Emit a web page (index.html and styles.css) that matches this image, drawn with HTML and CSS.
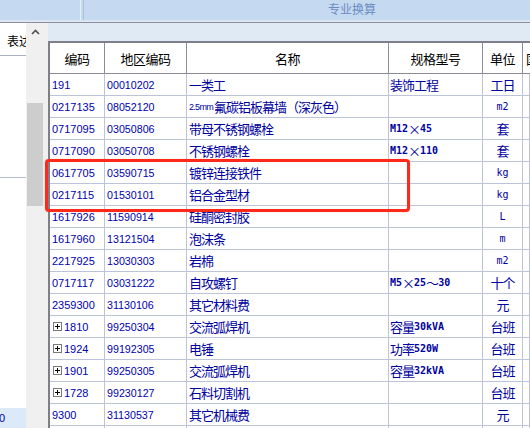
FILE: index.html
```html
<!DOCTYPE html>
<html>
<head>
<meta charset="utf-8">
<link rel="stylesheet" href="styles.css">
</head>
<body>
<div class="topbar">
  <div class="tabsep"></div>
  <div class="toptitle">专业换算</div>
</div>
<div class="topline1"></div>
<div class="topline2"></div>
<div class="main">
  <div class="left">
    <div class="lp-head">表达</div>
    <div class="lp-seg"></div>
    <div class="lp-fill"></div>
    <div class="lp-sel">0</div>
  </div>
  <div class="scroll">
    <svg class="arrow" width="9" height="6" viewBox="0 0 9 6"><path d="M1 5 L4.5 1.5 L8 5" fill="none" stroke="#505050" stroke-width="1.6"/></svg>
    <div class="thumb"></div>
  </div>
  <div class="content">
    <div class="band"></div>
    <div class="grid">
      <div class="row head">
        <div class="c">编码</div><div class="c">地区编码</div><div class="c">名称</div><div class="c">规格型号</div><div class="c">单位</div><div class="c last">国</div>
      </div>
      <div class="row"><div class="c code">191</div><div class="c code2">00010202</div><div class="c name">一类工</div><div class="c spec">装饰工程</div><div class="c unit">工日</div><div class="c"></div></div>
      <div class="row"><div class="c code">0217135</div><div class="c code2">08052120</div><div class="c name"><span class="asc">2.5mm</span>氟碳铝板幕墙（深灰色）</div><div class="c spec"></div><div class="c unit"><span class="ua">m2</span></div><div class="c"></div></div>
      <div class="row"><div class="c code">0717095</div><div class="c code2">03050806</div><div class="c name">带母不锈钢螺栓</div><div class="c spec"><span class="sa">M12</span>×<span class="sa">45</span></div><div class="c unit">套</div><div class="c"></div></div>
      <div class="row"><div class="c code">0717090</div><div class="c code2">03050708</div><div class="c name">不锈钢螺栓</div><div class="c spec"><span class="sa">M12</span>×<span class="sa">110</span></div><div class="c unit">套</div><div class="c"></div></div>
      <div class="row"><div class="c code">0617705</div><div class="c code2">03590715</div><div class="c name">镀锌连接铁件</div><div class="c spec"></div><div class="c unit"><span class="ua">kg</span></div><div class="c"></div></div>
      <div class="row"><div class="c code">0217115</div><div class="c code2">01530101</div><div class="c name">铝合金型材</div><div class="c spec"></div><div class="c unit"><span class="ua">kg</span></div><div class="c"></div></div>
      <div class="row"><div class="c code">1617926</div><div class="c code2">11590914</div><div class="c name">硅酮密封胶</div><div class="c spec"></div><div class="c unit"><span class="ua">L</span></div><div class="c"></div></div>
      <div class="row"><div class="c code">1617960</div><div class="c code2">13121504</div><div class="c name">泡沫条</div><div class="c spec"></div><div class="c unit"><span class="ua">m</span></div><div class="c"></div></div>
      <div class="row"><div class="c code">2217925</div><div class="c code2">13030303</div><div class="c name">岩棉</div><div class="c spec"></div><div class="c unit"><span class="ua">m2</span></div><div class="c"></div></div>
      <div class="row"><div class="c code">0717117</div><div class="c code2">03031222</div><div class="c name">自攻螺钉</div><div class="c spec"><span class="sa">M5</span>×<span class="sa">25</span>～<span class="sa">30</span></div><div class="c unit">十个</div><div class="c"></div></div>
      <div class="row"><div class="c code">2359300</div><div class="c code2">31130106</div><div class="c name">其它材料费</div><div class="c spec"></div><div class="c unit">元</div><div class="c"></div></div>
      <div class="row"><div class="c code pl"><svg class="plus" width="9" height="9" viewBox="0 0 9 9"><rect x="0.5" y="0.5" width="8" height="8" fill="#fff" stroke="#7a7a7a"/><path d="M2 4.5 H7 M4.5 2 V7" stroke="#000" stroke-width="1"/></svg>1810</div><div class="c code2">99250304</div><div class="c name">交流弧焊机</div><div class="c spec">容量<span class="sa">30kVA</span></div><div class="c unit">台班</div><div class="c"></div></div>
      <div class="row"><div class="c code pl"><svg class="plus" width="9" height="9" viewBox="0 0 9 9"><rect x="0.5" y="0.5" width="8" height="8" fill="#fff" stroke="#7a7a7a"/><path d="M2 4.5 H7 M4.5 2 V7" stroke="#000" stroke-width="1"/></svg>1924</div><div class="c code2">99192305</div><div class="c name">电锤</div><div class="c spec">功率<span class="sa">520W</span></div><div class="c unit">台班</div><div class="c"></div></div>
      <div class="row"><div class="c code pl"><svg class="plus" width="9" height="9" viewBox="0 0 9 9"><rect x="0.5" y="0.5" width="8" height="8" fill="#fff" stroke="#7a7a7a"/><path d="M2 4.5 H7 M4.5 2 V7" stroke="#000" stroke-width="1"/></svg>1901</div><div class="c code2">99250305</div><div class="c name">交流弧焊机</div><div class="c spec">容量<span class="sa">32kVA</span></div><div class="c unit">台班</div><div class="c"></div></div>
      <div class="row"><div class="c code pl"><svg class="plus" width="9" height="9" viewBox="0 0 9 9"><rect x="0.5" y="0.5" width="8" height="8" fill="#fff" stroke="#7a7a7a"/><path d="M2 4.5 H7 M4.5 2 V7" stroke="#000" stroke-width="1"/></svg>1728</div><div class="c code2">99230127</div><div class="c name">石料切割机</div><div class="c spec"></div><div class="c unit">台班</div><div class="c"></div></div>
      <div class="row"><div class="c code">9300</div><div class="c code2">31130537</div><div class="c name">其它机械费</div><div class="c spec"></div><div class="c unit">元</div><div class="c"></div></div>
      <div class="row"><div class="c code"></div><div class="c code2"></div><div class="c name"></div><div class="c spec"></div><div class="c unit"></div><div class="c"></div></div>
    </div>
    <div class="highlight"></div>
  </div>
</div>
</body>
</html>
```

FILE: styles.css
```css
html, body {
  margin: 0;
  padding: 0;
}
body {
  width: 530px;
  height: 428px;
  overflow: hidden;
  background: #ffffff;
  font-family: "Noto Sans CJK SC", "Liberation Sans", sans-serif;
}
.topbar {
  height: 20px;
  background: #c5d9f0;
  display: flex;
  align-items: stretch;
}
.tabsep {
  margin-left: 80px;
  width: 2px;
  border-left: 1px solid #e6eef8;
  border-right: 1px solid #a9c1df;
}
.toptitle {
  margin-left: 244px;
  font-size: 12px;
  line-height: 17px;
  color: #6b8dc2;
}
.topline1 {
  height: 2px;
  background: #dae6f4;
}
.topline2 {
  height: 1px;
  background: #8e919b;
}
.main {
  display: flex;
  height: 405px;
}
.left {
  width: 26px;
  flex: none;
  background: #ffffff;
  display: flex;
  flex-direction: column;
  overflow: hidden;
}
.lp-head {
  height: 33px;
  box-sizing: border-box;
  padding: 10px 0 0 7px;
  line-height: 16px;
  font-size: 12px;
  color: #000;
  white-space: nowrap;
  border-bottom: 1px solid #a7b0bf;
}
.lp-seg {
  height: 122px;
  box-sizing: border-box;
  border-bottom: 1px solid #b4bccb;
}
.lp-fill {
  flex: 1;
}
.lp-sel {
  height: 20px;
  background: #dce9f8;
  font-family: "Liberation Sans", sans-serif;
  font-size: 11px;
  line-height: 20px;
  color: #00009c;
  text-indent: -1px;
}
.scroll {
  width: 22px;
  flex: none;
  background: #f0f0f0;
  display: flex;
  flex-direction: column;
}
.arrow {
  margin: 6px 0 0 5px;
  display: block;
}
.thumb {
  margin: 68px 0 0 1px;
  width: 16px;
  height: 103px;
  background: #cdcdcd;
}
.content {
  flex: 1;
  position: relative;
  background: #dfeaf5;
}
.band {
  height: 18px;
}
.grid {
  background: #ffffff;
  border-top: 2px solid #7e7f88;
  border-left: 2px solid #7e7f88;
}
.row {
  display: grid;
  grid-template-columns: 55px 82px 202px 94px 40px 1fr;
  height: 22px;
}
.row.head {
  height: 31px;
}
.c {
  box-sizing: border-box;
  border-right: 1px solid #bcc5d7;
  border-bottom: 1px solid #bcc5d7;
  display: flex;
  align-items: center;
  white-space: nowrap;
  overflow: hidden;
  color: #0000a0;
}
.head .c {
  border-right-color: #8b8c96;
  border-bottom-color: #8b8c96;
  justify-content: center;
  color: #000;
  font-size: 13px;
  letter-spacing: -0.5px;
}
.head .c.last {
  justify-content: flex-start;
  padding-left: 3px;
  border-right: none;
}
.c.code, .c.code2 {
  font-family: "Liberation Sans", sans-serif;
  font-size: 11px;
  padding-left: 2px;
  color: #0000b0;
}
.c.code2 {
  padding-left: 2px;
  font-size: 10.7px;
}
.c.pl {
  padding-left: 3px;
}
.plus {
  display: block;
  margin-right: 2px;
  flex: none;
}
.c.name {
  padding-left: 2px;
  font-size: 13px;
  letter-spacing: -1px;
}
.asc {
  font-family: "Liberation Sans", sans-serif;
  font-size: 9px;
  letter-spacing: -0.7px;
  margin-right: 1px;
}
.c.spec {
  padding-left: 1px;
  font-size: 13px;
  letter-spacing: -1px;
}
.sa {
  font-family: "DejaVu Sans Mono", monospace;
  font-size: 10px;
  letter-spacing: 0;
  font-weight: bold;
}
.c.unit {
  justify-content: center;
  font-size: 13px;
  letter-spacing: -1px;
}
.ua {
  font-family: "DejaVu Sans Mono", monospace;
  font-size: 10px;
  letter-spacing: 0;
}
.highlight {
  position: absolute;
  left: -3px;
  top: 136px;
  width: 365px;
  height: 53px;
  box-sizing: border-box;
  border: 3px solid #fd2a1c;
  border-radius: 4px;
  box-shadow: 0 0 1px rgba(255, 60, 40, 0.6);
}
```
